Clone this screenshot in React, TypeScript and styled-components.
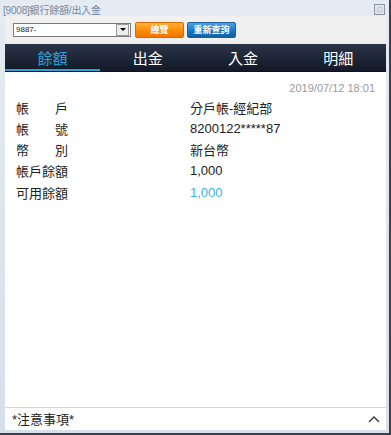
import styled, { createGlobalStyle } from "styled-components";

const GlobalStyle = createGlobalStyle`
  html, body {
    margin: 0;
    padding: 0;
    background: #ffffff;
  }
  body {
    font-family: Arial, "Liberation Sans", "Noto Sans CJK TC", sans-serif;
  }
`;

const Window = styled.div`
  width: 391px;
  height: 435px;
  box-sizing: border-box;
  display: flex;
  flex-direction: column;
  padding: 0 3px 3px 5px;
  background: linear-gradient(#e4ebf3, #d6e0ea);
  border-right: 2px solid #39414c;
  border-bottom: 2px solid #39414c;
`;

const TitleBar = styled.div`
  height: 16px;
  display: flex;
  align-items: center;
  justify-content: space-between;
  margin-left: -2px;
  padding-right: 1px;
  padding-top: 2px;
  box-sizing: border-box;
`;

const Title = styled.span`
  font-size: 10px;
  color: #7a8796;
  letter-spacing: -0.2px;
`;

const CloseBox = styled.div`
  width: 9px;
  height: 9px;
  border: 1px solid #8d97a3;
  background: #dfe5ec;
  display: flex;
  align-items: center;
  justify-content: center;
  font-size: 7px;
  color: #6c7682;
  line-height: 1;
`;

const Toolbar = styled.div`
  height: 27px;
  background: #f0f0f0;
  display: flex;
  align-items: center;
  padding-left: 8px;
  gap: 4px;
  box-sizing: border-box;
`;

const SelectBox = styled.div`
  width: 114px;
  height: 12px;
  border: 1px solid #7b7b7b;
  background: #fff;
  display: flex;
  align-items: center;
  justify-content: space-between;
  font-size: 8px;
  color: #222;
  padding-left: 2px;
  box-sizing: content-box;
`;

const Arrow = styled.div`
  width: 11px;
  height: 10px;
  margin-right: 1px;
  border: 1px solid #9a9a9a;
  background: #ececec;
  display: flex;
  align-items: center;
  justify-content: center;
  &::after {
    content: "";
    border-left: 3px solid transparent;
    border-right: 3px solid transparent;
    border-top: 3px solid #000;
  }
`;

const ToolButton = styled.button<{ $tone: "orange" | "blue" }>`
  width: 49px;
  height: 16px;
  padding: 0;
  margin-left: ${(p) => (p.$tone === "orange" ? "0" : "-1px")};
  font-family: inherit;
  font-size: 9px;
  font-weight: bold;
  color: #fff;
  border-radius: 2px;
  border: 1px solid ${(p) => (p.$tone === "orange" ? "#d86a00" : "#1e5f99")};
  background: ${(p) =>
    p.$tone === "orange"
      ? "linear-gradient(#ffb243, #ff8a00 55%, #f17400)"
      : "linear-gradient(#4aa3e6, #1b78c7 55%, #12609f)"};
`;

const Panel = styled.div`
  flex: 1;
  display: flex;
  flex-direction: column;
  background: #fff;
  margin-top: 1px;
`;

const Tabs = styled.div`
  height: 27px;
  display: grid;
  grid-template-columns: repeat(4, 1fr);
  background: linear-gradient(#2a3447, #121a28);
  border-bottom: 1px solid #0c1320;
`;

const Tab = styled.div<{ $active?: boolean }>`
  display: flex;
  align-items: center;
  justify-content: center;
  font-size: 15px;
  color: ${(p) => (p.$active ? "#2aa3da" : "#ffffff")};
  border-bottom: 2px solid ${(p) => (p.$active ? "#2aa3da" : "transparent")};
  padding-top: 1px;
`;

const Content = styled.div`
  flex: 1;
  padding: 10px 10px 0 10px;
`;

const Stamp = styled.div`
  text-align: right;
  font-size: 11px;
  color: #999;
  margin-bottom: 3px;
  padding-right: 1px;
`;

const Row = styled.div<{ $gap?: boolean }>`
  display: grid;
  grid-template-columns: 175px 1fr;
  height: 21px;
  margin-top: ${(p) => (p.$gap ? "1px" : "0")};
  align-items: center;
  font-size: 13px;
  color: #222;
`;

const Label = styled.div<{ $spread?: boolean }>`
  display: flex;
  width: ${(p) => (p.$spread ? "52px" : "auto")};
  justify-content: ${(p) => (p.$spread ? "space-between" : "flex-start")};
  padding-left: 1px;
`;

const Value = styled.div<{ $accent?: boolean }>`
  color: ${(p) => (p.$accent ? "#3ab3e0" : "#222")};
`;

const Footer = styled.div`
  height: 21px;
  display: flex;
  align-items: center;
  justify-content: space-between;
  border-top: 1px solid #d6d6d6;
  padding: 0 6px 0 7px;
  font-size: 13px;
  color: #222;
  margin-bottom: 1px;
`;

const rows = [
  { label: ["帳", "戶"], value: "分戶帳-經紀部" },
  { label: ["帳", "號"], value: "8200122*****87" },
  { label: ["幣", "別"], value: "新台幣" },
  { label: ["帳戶餘額"], value: "1,000" },
  { label: ["可用餘額"], value: "1,000", accent: true },
];

export default function App() {
  return (
    <>
      <GlobalStyle />
      <Window>
        <TitleBar>
          <Title>[9008]銀行餘額/出入金</Title>
          <CloseBox>□</CloseBox>
        </TitleBar>
        <Toolbar>
          <SelectBox>
            9887-
            <Arrow />
          </SelectBox>
          <ToolButton $tone="orange">總覽</ToolButton>
          <ToolButton $tone="blue">重新查詢</ToolButton>
        </Toolbar>
        <Panel>
          <Tabs>
            <Tab $active>餘額</Tab>
            <Tab>出金</Tab>
            <Tab>入金</Tab>
            <Tab>明細</Tab>
          </Tabs>
          <Content>
            <Stamp>2019/07/12 18:01</Stamp>
            {rows.map((r, i) => (
              <Row key={i} $gap={r.accent}>
                <Label $spread={r.label.length > 1}>
                  {r.label.map((t) => (
                    <span key={t}>{t}</span>
                  ))}
                </Label>
                <Value $accent={r.accent}>{r.value}</Value>
              </Row>
            ))}
          </Content>
          <Footer>
            <span>*注意事項*</span>
            <svg width="12" height="8" viewBox="0 0 12 8">
              <path d="M1 7 L6 2 L11 7" fill="none" stroke="#333" strokeWidth="1.3" />
            </svg>
          </Footer>
        </Panel>
      </Window>
    </>
  );
}
